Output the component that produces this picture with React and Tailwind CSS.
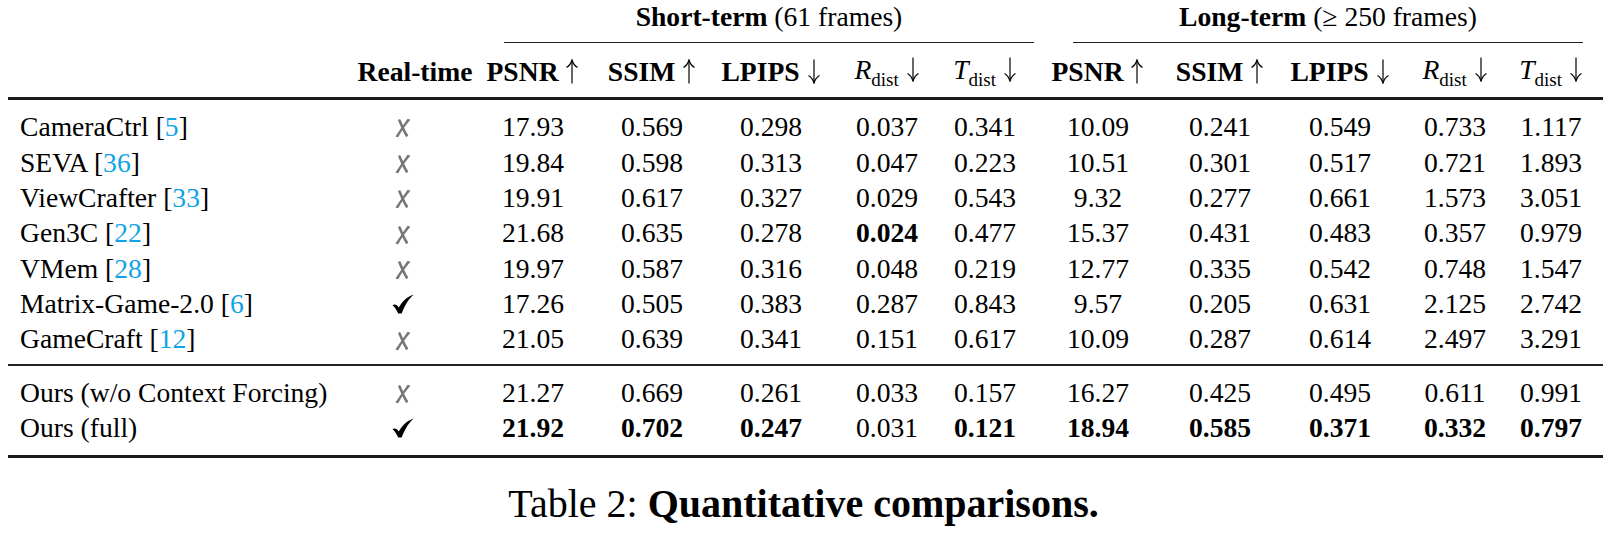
import React from "react";

const rows = [
  ["CameraCtrl", "5", false, ["17.93", "0.569", "0.298", "0.037", "0.341", "10.09", "0.241", "0.549", "0.733", "1.117"], []],
  ["SEVA", "36", false, ["19.84", "0.598", "0.313", "0.047", "0.223", "10.51", "0.301", "0.517", "0.721", "1.893"], []],
  ["ViewCrafter", "33", false, ["19.91", "0.617", "0.327", "0.029", "0.543", "9.32", "0.277", "0.661", "1.573", "3.051"], []],
  ["Gen3C", "22", false, ["21.68", "0.635", "0.278", "0.024", "0.477", "15.37", "0.431", "0.483", "0.357", "0.979"], [3]],
  ["VMem", "28", false, ["19.97", "0.587", "0.316", "0.048", "0.219", "12.77", "0.335", "0.542", "0.748", "1.547"], []],
  ["Matrix-Game-2.0", "6", true, ["17.26", "0.505", "0.383", "0.287", "0.843", "9.57", "0.205", "0.631", "2.125", "2.742"], []],
  ["GameCraft", "12", false, ["21.05", "0.639", "0.341", "0.151", "0.617", "10.09", "0.287", "0.614", "2.497", "3.291"], []],
];

const ours = [
  ["Ours (w/o Context Forcing)", null, false, ["21.27", "0.669", "0.261", "0.033", "0.157", "16.27", "0.425", "0.495", "0.611", "0.991"], []],
  ["Ours (full)", null, true, ["21.92", "0.702", "0.247", "0.031", "0.121", "18.94", "0.585", "0.371", "0.332", "0.797"], [0, 1, 2, 4, 5, 6, 7, 8, 9]],
];

const GRID =
  "grid grid-cols-[349px_116px_120px_118px_120px_112px_84px_142px_102px_138px_92px_100px]";

function Cross() {
  return (
    <svg width="17" height="20" viewBox="0 0 17 20" className="mt-[3px] block">
      <path d="M4 2.2 C4.6 1.2 6 1 6.6 1.8 C9 7 11 12.5 14.4 17.6 L12.2 19.2 C9 14 6.4 8 4 2.2 Z" fill="#777" />
      <path d="M13.6 0.8 L16.4 1.8 C12 7 7.6 13 4.2 19.2 L1.4 18.4 C5.4 12.4 9.6 6.4 13.6 0.8 Z" fill="#777" />
    </svg>
  );
}

function Check() {
  return (
    <svg width="22" height="20" viewBox="0 0 22 20" className="ml-[2px] block">
      <path
        d="M0.5 11.2 C2.8 9.6 5 10.8 6.8 13.6 C9.8 7.6 15 2.6 21.6 0.4 C17 4.6 13 10.6 9.6 19.6 L6.2 19.6 C4.6 15.8 2.8 13.2 0.5 11.2 Z"
        fill="#000"
      />
    </svg>
  );
}

function Row({ r }) {
  const [name, cite, ok, vals, bold] = r;
  return (
    <div className={`${GRID} h-[35.36px] items-center`}>
      <div className="pl-[12px] whitespace-nowrap">
        {name}
        {cite && (
          <>
            {" "}[<span className="text-[#0fa3e6]">{cite}</span>]
          </>
        )}
      </div>
      <div className="flex justify-center pr-[26px]">{ok ? <Check /> : <Cross />}</div>
      {vals.map((v, i) => (
        <div key={i} className={`text-center ${bold.includes(i) ? "font-bold" : ""}`}>
          {v}
        </div>
      ))}
    </div>
  );
}

function Arrow({ up }) {
  return (
    <svg width="14" height="25" viewBox="0 0 14 25" className="inline-block align-[-3px]">
      {up ? (
        <>
          <path d="M7 24.5 L7 1.5" stroke="#000" strokeWidth="1.2" fill="none" />
          <path d="M1.5 8.5 C4 7 6 4.5 7 1 C8 4.5 10 7 12.5 8.5" stroke="#000" strokeWidth="1.2" fill="none" />
        </>
      ) : (
        <>
          <path d="M7 0.5 L7 23.5" stroke="#000" strokeWidth="1.2" fill="none" />
          <path d="M1.5 16.5 C4 18 6 20.5 7 24 C8 20.5 10 18 12.5 16.5" stroke="#000" strokeWidth="1.2" fill="none" />
        </>
      )}
    </svg>
  );
}

function Sub({ l }) {
  return (
    <span className="whitespace-nowrap">
      <i>{l}</i>
      <span className="text-[19px] align-sub">dist</span>{" "}
      <Arrow />
    </span>
  );
}

function Hd({ t, up }) {
  return (
    <span className="whitespace-nowrap">
      <b>{t}</b> <Arrow up={up} />
    </span>
  );
}

function HeaderCells() {
  return (
    <>
      <div className="text-center"><Hd t="PSNR" up /></div>
      <div className="text-center"><Hd t="SSIM" up /></div>
      <div className="text-center"><Hd t="LPIPS" /></div>
      <div className="text-center"><Sub l="R" /></div>
      <div className="text-center"><Sub l="T" /></div>
    </>
  );
}

export default function App() {
  return (
    <div className="w-[1607px] h-[537px] bg-white text-black font-[Liberation_Serif,Times_New_Roman,serif] text-[27.6px] leading-none">
      <div className="ml-[8px] w-[1595px]">
        {/* group titles */}
        <div className="flex h-[43px]">
          <div className="w-[496px] shrink-0" />
          <div className="w-[530px] shrink-0 flex flex-col">
            <div className="h-[33px] leading-[33px] text-center whitespace-nowrap">
              <b>Short-term</b> (61 frames)
            </div>
            <div className="mt-[9px] h-px bg-[#222]" />
          </div>
          <div className="w-[39px] shrink-0" />
          <div className="w-[510px] shrink-0 flex flex-col">
            <div className="h-[33px] leading-[33px] text-center whitespace-nowrap">
              <b>Long-term</b> (≥ 250 frames)
            </div>
            <div className="mt-[9px] h-px bg-[#222]" />
          </div>
        </div>
        {/* column headers */}
        <div className={`${GRID} h-[54px] pt-[4px] items-center`}>
          <div />
          <div className="text-center font-bold">Real-time</div>
          <HeaderCells />
          <HeaderCells />
        </div>
        <div className="h-[3px] bg-[#1a1a1a]" />
        <div className="pt-[9.3px] pb-[7.2px]">
          {rows.map((r, i) => (
            <Row key={i} r={r} />
          ))}
        </div>
        <div className="h-[2px] bg-[#222]" />
        <div className="pt-[8.8px] pb-[9.5px]">
          {ours.map((r, i) => (
            <Row key={i} r={r} />
          ))}
        </div>
        <div className="h-[3px] bg-[#1a1a1a]" />
      </div>
      <div className="mt-[26px] text-center text-[40px] leading-[40px] whitespace-nowrap">
        Table 2: <b>Quantitative comparisons.</b>
      </div>
    </div>
  );
}
